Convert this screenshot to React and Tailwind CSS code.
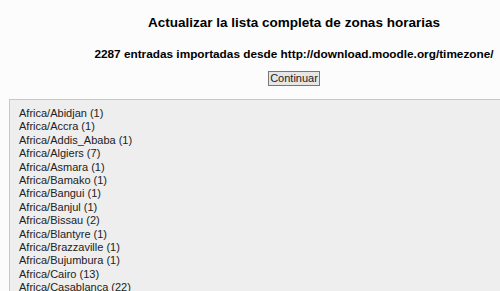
import React from 'react';

const zones = [
  'Africa/Abidjan (1)',
  'Africa/Accra (1)',
  'Africa/Addis_Ababa (1)',
  'Africa/Algiers (7)',
  'Africa/Asmara (1)',
  'Africa/Bamako (1)',
  'Africa/Bangui (1)',
  'Africa/Banjul (1)',
  'Africa/Bissau (2)',
  'Africa/Blantyre (1)',
  'Africa/Brazzaville (1)',
  'Africa/Bujumbura (1)',
  'Africa/Cairo (13)',
  'Africa/Casablanca (22)',
  'Africa/Ceuta (35)',
  'Africa/Conakry (1)',
];

const App = () => {
  return (
    <div className="h-[291px] overflow-hidden bg-[#fcfcfc] text-black" style={{ fontFamily: '"Liberation Sans", Arial, sans-serif' }}>
      <div className="ml-[88px] w-[412px] flex flex-col items-center pt-[15px]">
        <h2 className="text-[13.5px] font-bold leading-[16px] whitespace-nowrap">Actualizar la lista completa de zonas horarias</h2>
        <p className="mt-[16px] text-[11.8px] font-bold leading-[14px] whitespace-nowrap">
          2287 entradas importadas desde http://download.moodle.org/timezone/
        </p>
        <button className="mt-[10px] h-[15px] px-[1px] border border-[#777] bg-[#e6e6e6] text-[11px] leading-[13px] text-[#222]">
          Continuar
        </button>
      </div>

      {/* Entries list */}
      <div className="mt-[13px] ml-[9px] border-t border-l border-[#c8c8c8] bg-[#eeeeee] pt-[7px] pl-[9px]">
        {zones.map(z => (
          <div key={z} className="text-[11px] leading-[13.4px] text-[#222]">{z}</div>
        ))}
      </div>
    </div>
  );
};

export default App;
